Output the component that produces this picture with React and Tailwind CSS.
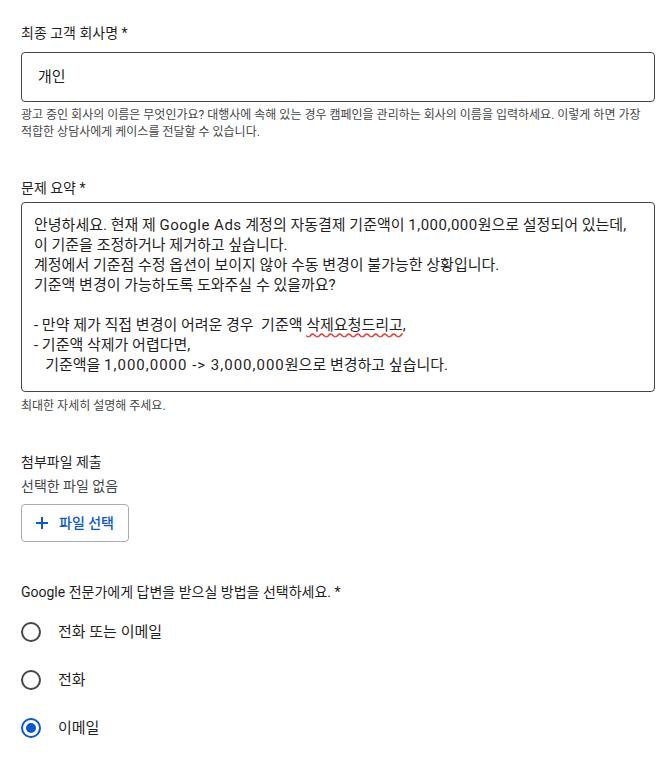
import React, { useState } from 'react'

const font = { fontFamily: 'Roboto, "Noto Sans CJK KR", sans-serif' }

// latin runs in the reference render a bit wider than Roboto
const Wide = ({ children, className = 'tracking-[0.5px]' }) => <span className={className}>{children}</span>

const Radio = ({ checked, label, onClick }) => (
  <div className="flex items-center h-12 cursor-pointer" onClick={onClick}>
    <span
      className={`flex items-center justify-center w-5 h-5 rounded-full border-2 ${
        checked ? 'border-[#0b57d0]' : 'border-[#444746]'
      }`}
    >
      {checked && <span className="w-2.5 h-2.5 rounded-full bg-[#0b57d0]" />}
    </span>
    <span className="ml-[17px] text-[15px] leading-5 text-[#1f1f1f]">{label}</span>
  </div>
)

const App = () => {
  const [method, setMethod] = useState('email')

  return (
    <div className="bg-white min-h-[762px] pl-[21px] pr-[6px]" style={font}>

      {/* 회사명 */}
      <div className="pt-[23px]">
        <p className="text-sm leading-5 text-[#1f1f1f]">최종 고객 회사명 *</p>
        <div className="mt-[9px] h-[50px] border border-[#444746] rounded flex items-center pl-4">
          <span className="text-[15px] text-[#1f1f1f]">개인</span>
        </div>
        <p className="mt-[5px] text-xs leading-[17px] text-[#444746]">
          광고 중인 회사의 이름은 무엇인가요? 대행사에 속해 있는 경우 캠페인을 관리하는 회사의 이름을 입력하세요. 이렇게 하면 가장
          <br />
          적합한 상담사에게 케이스를 전달할 수 있습니다.
        </p>
      </div>

      {/* 문제 요약 */}
      <div className="mt-[37px]">
        <p className="text-sm leading-5 text-[#1f1f1f]">문제 요약 *</p>
        <div className="mt-1 h-[190px] border border-[#444746] rounded pt-3 pl-3 text-[15px] leading-5 text-[#1f1f1f] whitespace-pre">
          <div>
            안녕하세요. 현재 제 <Wide>Google Ads</Wide> 계정의 자동결제 기준액이 <Wide>1,000,000</Wide>원으로 설정되어 있는데,
          </div>
          <div>이 기준을 조정하거나 제거하고 싶습니다.</div>
          <div>계정에서 기준점 수정 옵션이 보이지 않아 수동 변경이 불가능한 상황입니다.</div>
          <div>기준액 변경이 가능하도록 도와주실 수 있을까요?</div>
          <div>&nbsp;</div>
          <div>
            {'- 만약 제가 직접 변경이 어려운 경우  기준액 '}
            <span className="underline decoration-wavy decoration-[#e53935] underline-offset-2">삭제요청드리고</span>,
          </div>
          <div>- 기준액 삭제가 어렵다면,</div>
          <div>
            {'   기준액을 '}
            <Wide className="tracking-[1px]">{'1,000,0000 -> 3,000,000'}</Wide>
            원으로 변경하고 싶습니다.
          </div>
        </div>
        <p className="mt-1.5 text-xs leading-[17px] text-[#444746]">최대한 자세히 설명해 주세요.</p>
      </div>

      {/* 첨부파일 */}
      <div className="mt-[37px]">
        <p className="text-sm leading-5 text-[#1f1f1f]">첨부파일 제출</p>
        <p className="mt-1 text-sm leading-5 text-[#444746]">선택한 파일 없음</p>
        <button className="mt-2 w-[108px] h-[38px] border border-[#a8abb0] rounded flex items-center pl-[13px]">
          <svg width="14" height="14" viewBox="0 0 14 14" className="text-[#0b57d0]">
            <path d="M7 1v12M1 7h12" stroke="currentColor" strokeWidth="2" />
          </svg>
          <span className="ml-[10px] text-sm font-medium text-[#0b57d0]">파일 선택</span>
        </button>
      </div>

      {/* 답변 방법 */}
      <div className="mt-10">
        <p className="text-sm leading-5 text-[#1f1f1f]">Google 전문가에게 답변을 받으실 방법을 선택하세요. *</p>
        <div className="mt-1.5">
          <Radio label="전화 또는 이메일" checked={method === 'both'} onClick={() => setMethod('both')} />
          <Radio label="전화" checked={method === 'phone'} onClick={() => setMethod('phone')} />
          <Radio label="이메일" checked={method === 'email'} onClick={() => setMethod('email')} />
        </div>
      </div>

    </div>
  )
}

export default App
